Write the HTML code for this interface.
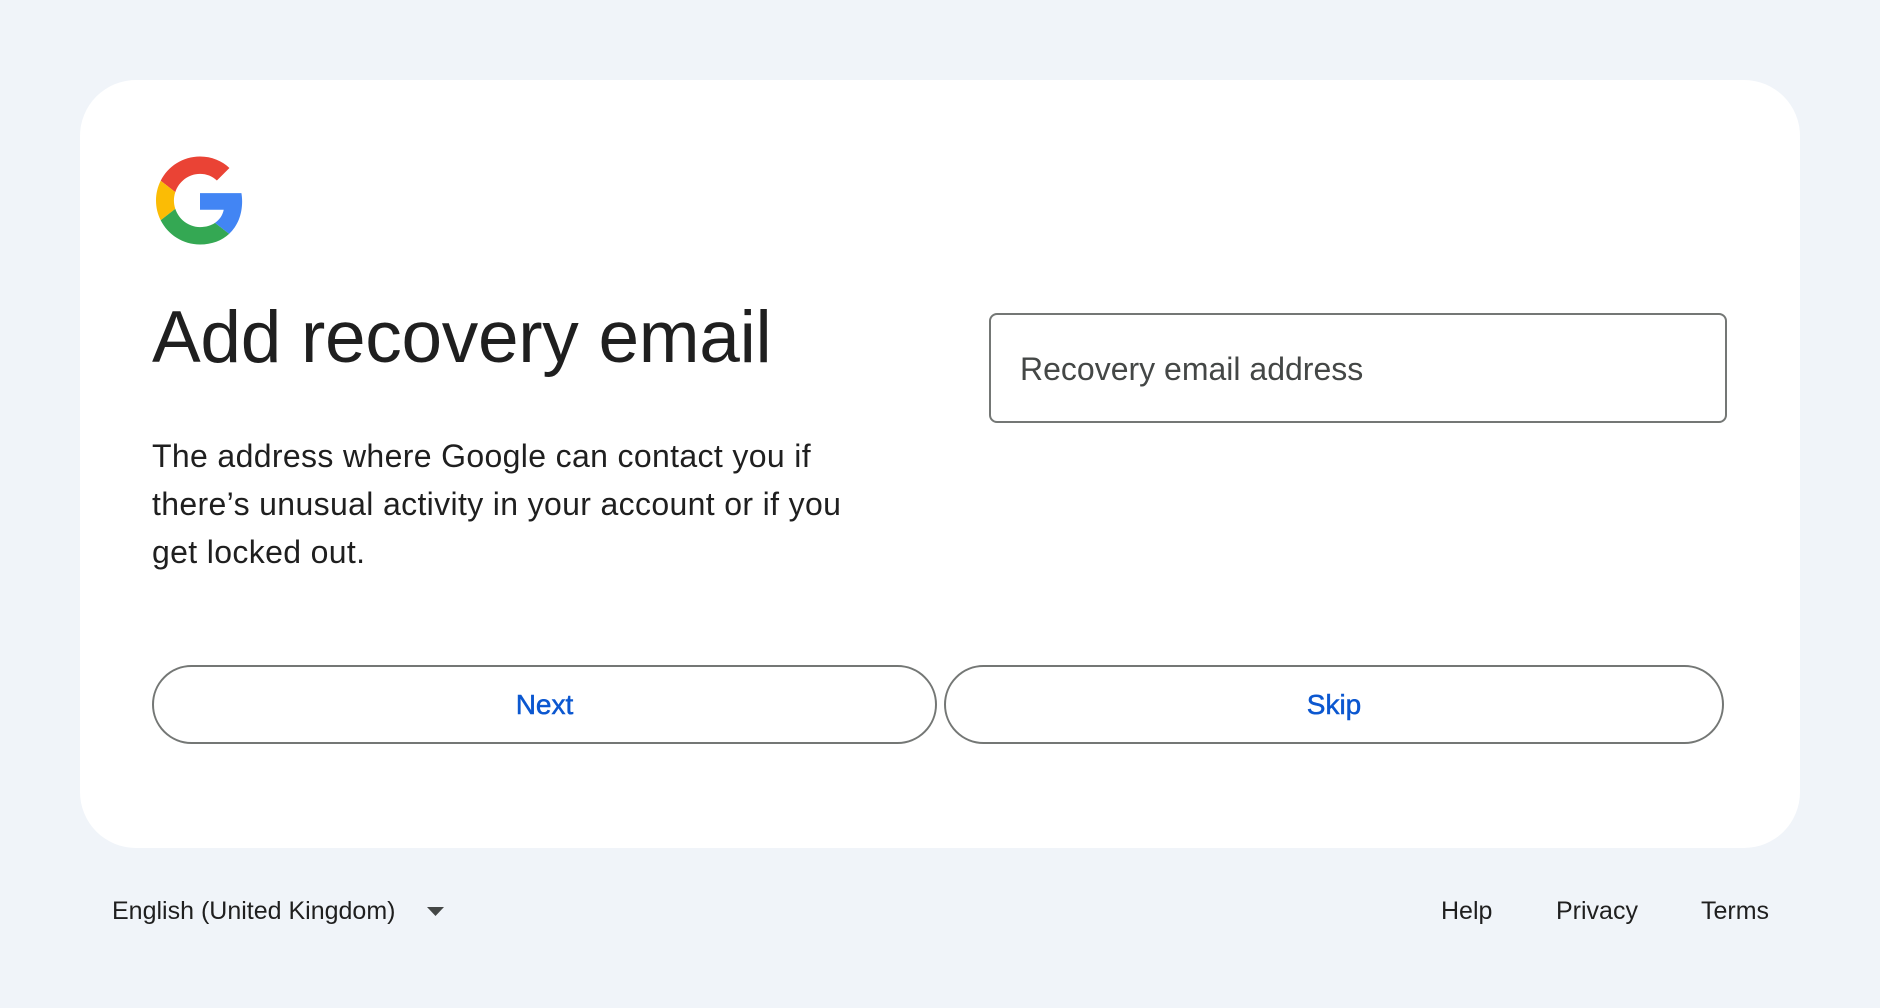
<!DOCTYPE html>
<html><head><meta charset="utf-8"><style>
*{margin:0;padding:0;box-sizing:border-box}
body{width:1880px;height:1008px;background:#f0f4f9;font-family:"Liberation Sans",sans-serif;position:relative;overflow:hidden;color:#1f1f1f}
.card{position:absolute;left:80px;top:80px;width:1720px;height:768px;background:#fff;border-radius:56px}
.abs{position:absolute;white-space:nowrap}
h1{position:absolute;left:152px;top:298px;font-size:73px;font-weight:400;letter-spacing:-0.3px;line-height:80px;color:#1f1f1f;white-space:nowrap}
.p{position:absolute;left:152px;top:432px;font-size:32px;letter-spacing:0.35px;line-height:48px;color:#1f1f1f;white-space:nowrap}
.inp{position:absolute;left:989px;top:313px;width:738px;height:110px;border:2px solid #747775;border-radius:8px}
.inp span{position:absolute;left:29px;top:36px;font-size:32px;color:#444746}
.btn{position:absolute;top:665px;height:79px;border:2px solid #747775;border-radius:40px;color:#0b57d0;font-size:28px;font-weight:400;-webkit-text-stroke:0.5px #0b57d0;display:flex;align-items:center;justify-content:center}
.f{position:absolute;top:897px;font-size:25px;color:#1f1f1f}
</style></head><body>
<div class="card"></div>
<svg class="abs" style="left:156px;top:156px" width="88" height="89" viewBox="0 0 48 48">
<path fill="#EA4335" d="M24 9.5c3.54 0 6.71 1.22 9.21 3.6l6.85-6.85C35.9 2.38 30.470 0 24 0 14.62 0 6.51 5.38 2.56 13.22l7.98 6.19C12.43 13.72 17.74 9.5 24 9.5z"/>
<path fill="#4285F4" d="M46.98 24.55c0-1.570-.15-3.09-.38-4.55H24v9.02h12.94c-.58 2.96-2.26 5.48-4.78 7.18l7.73 6c4.51-4.18 7.09-10.36 7.09-17.65z"/>
<path fill="#FBBC05" d="M10.53 28.59c-.48-1.45-.76-2.99-.76-4.59s.27-3.14.76-4.59l-7.98-6.19C.92 16.46 0 20.12 0 24c0 3.88.92 7.54 2.56 10.78l7.97-6.19z"/>
<path fill="#34A853" d="M24 48c6.48 0 11.93-2.13 15.89-5.81l-7.73-6c-2.15 1.45-4.92 2.3-8.16 2.3-6.26 0-11.57-4.22-13.47-9.91l-7.98 6.19C6.51 42.62 14.62 48 24 48z"/>
</svg>
<h1>Add recovery email</h1>
<div class="p">The address where Google can contact you if<br>there’s unusual activity in your account or if you<br>get locked out.</div>
<div class="inp"><span>Recovery email address</span></div>
<div class="btn" style="left:152px;width:785px">Next</div>
<div class="btn" style="left:944px;width:780px">Skip</div>
<div class="f" style="left:112px">English (United Kingdom)</div>
<svg class="abs" style="left:427px;top:907px" width="18" height="9"><path d="M0 0h17L8.5 9z" fill="#444746"/></svg>
<div class="f" style="left:1441px">Help</div>
<div class="f" style="left:1556px">Privacy</div>
<div class="f" style="left:1701px">Terms</div>
</body></html>
